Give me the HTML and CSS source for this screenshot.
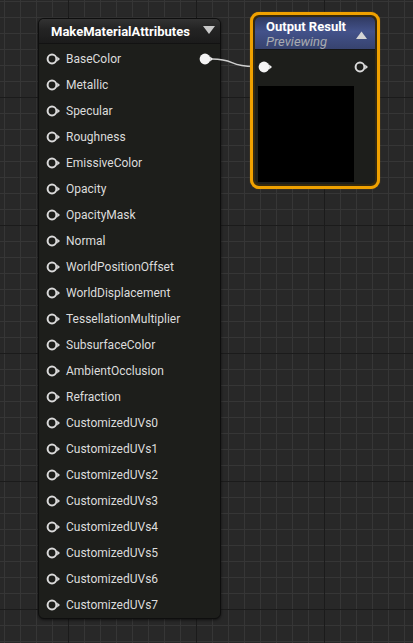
FILE: index.html
```html
<!DOCTYPE html>
<html>
<head>
<meta charset="utf-8">
<link rel="stylesheet" href="styles.css">
</head>
<body>
<div class="canvas">
  <div class="node mma">
    <div class="mma-head">
      <span class="mma-title">MakeMaterialAttributes</span>
      <svg class="tri" width="12" height="9" viewBox="0 0 12 9"><polygon points="0,0 12,0 6,8" fill="#c9c9c9"/></svg>
    </div>
    <div class="mma-body">
      <div class="row"><svg class="pin" width="16" height="12" viewBox="0 0 16 12"><circle cx="6" cy="6" r="4.4" fill="none" stroke="#dadada" stroke-width="2"/><polygon points="11.2,3.5 14,6 11.2,8.5" fill="#dadada"/></svg><span class="lbl">BaseColor</span><svg class="pin out" width="16" height="12" viewBox="0 0 16 12"><circle cx="6" cy="6" r="5.4" fill="#f4f4f4"/><polygon points="11.2,3.5 14,6 11.2,8.5" fill="#f4f4f4"/></svg></div>
      <div class="row"><svg class="pin" width="16" height="12" viewBox="0 0 16 12"><circle cx="6" cy="6" r="4.4" fill="none" stroke="#dadada" stroke-width="2"/><polygon points="11.2,3.5 14,6 11.2,8.5" fill="#dadada"/></svg><span class="lbl">Metallic</span></div>
      <div class="row"><svg class="pin" width="16" height="12" viewBox="0 0 16 12"><circle cx="6" cy="6" r="4.4" fill="none" stroke="#dadada" stroke-width="2"/><polygon points="11.2,3.5 14,6 11.2,8.5" fill="#dadada"/></svg><span class="lbl">Specular</span></div>
      <div class="row"><svg class="pin" width="16" height="12" viewBox="0 0 16 12"><circle cx="6" cy="6" r="4.4" fill="none" stroke="#dadada" stroke-width="2"/><polygon points="11.2,3.5 14,6 11.2,8.5" fill="#dadada"/></svg><span class="lbl">Roughness</span></div>
      <div class="row"><svg class="pin" width="16" height="12" viewBox="0 0 16 12"><circle cx="6" cy="6" r="4.4" fill="none" stroke="#dadada" stroke-width="2"/><polygon points="11.2,3.5 14,6 11.2,8.5" fill="#dadada"/></svg><span class="lbl">EmissiveColor</span></div>
      <div class="row"><svg class="pin" width="16" height="12" viewBox="0 0 16 12"><circle cx="6" cy="6" r="4.4" fill="none" stroke="#dadada" stroke-width="2"/><polygon points="11.2,3.5 14,6 11.2,8.5" fill="#dadada"/></svg><span class="lbl">Opacity</span></div>
      <div class="row"><svg class="pin" width="16" height="12" viewBox="0 0 16 12"><circle cx="6" cy="6" r="4.4" fill="none" stroke="#dadada" stroke-width="2"/><polygon points="11.2,3.5 14,6 11.2,8.5" fill="#dadada"/></svg><span class="lbl">OpacityMask</span></div>
      <div class="row"><svg class="pin" width="16" height="12" viewBox="0 0 16 12"><circle cx="6" cy="6" r="4.4" fill="none" stroke="#dadada" stroke-width="2"/><polygon points="11.2,3.5 14,6 11.2,8.5" fill="#dadada"/></svg><span class="lbl">Normal</span></div>
      <div class="row"><svg class="pin" width="16" height="12" viewBox="0 0 16 12"><circle cx="6" cy="6" r="4.4" fill="none" stroke="#dadada" stroke-width="2"/><polygon points="11.2,3.5 14,6 11.2,8.5" fill="#dadada"/></svg><span class="lbl">WorldPositionOffset</span></div>
      <div class="row"><svg class="pin" width="16" height="12" viewBox="0 0 16 12"><circle cx="6" cy="6" r="4.4" fill="none" stroke="#dadada" stroke-width="2"/><polygon points="11.2,3.5 14,6 11.2,8.5" fill="#dadada"/></svg><span class="lbl">WorldDisplacement</span></div>
      <div class="row"><svg class="pin" width="16" height="12" viewBox="0 0 16 12"><circle cx="6" cy="6" r="4.4" fill="none" stroke="#dadada" stroke-width="2"/><polygon points="11.2,3.5 14,6 11.2,8.5" fill="#dadada"/></svg><span class="lbl">TessellationMultiplier</span></div>
      <div class="row"><svg class="pin" width="16" height="12" viewBox="0 0 16 12"><circle cx="6" cy="6" r="4.4" fill="none" stroke="#dadada" stroke-width="2"/><polygon points="11.2,3.5 14,6 11.2,8.5" fill="#dadada"/></svg><span class="lbl">SubsurfaceColor</span></div>
      <div class="row"><svg class="pin" width="16" height="12" viewBox="0 0 16 12"><circle cx="6" cy="6" r="4.4" fill="none" stroke="#dadada" stroke-width="2"/><polygon points="11.2,3.5 14,6 11.2,8.5" fill="#dadada"/></svg><span class="lbl">AmbientOcclusion</span></div>
      <div class="row"><svg class="pin" width="16" height="12" viewBox="0 0 16 12"><circle cx="6" cy="6" r="4.4" fill="none" stroke="#dadada" stroke-width="2"/><polygon points="11.2,3.5 14,6 11.2,8.5" fill="#dadada"/></svg><span class="lbl">Refraction</span></div>
      <div class="row"><svg class="pin" width="16" height="12" viewBox="0 0 16 12"><circle cx="6" cy="6" r="4.4" fill="none" stroke="#dadada" stroke-width="2"/><polygon points="11.2,3.5 14,6 11.2,8.5" fill="#dadada"/></svg><span class="lbl">CustomizedUVs0</span></div>
      <div class="row"><svg class="pin" width="16" height="12" viewBox="0 0 16 12"><circle cx="6" cy="6" r="4.4" fill="none" stroke="#dadada" stroke-width="2"/><polygon points="11.2,3.5 14,6 11.2,8.5" fill="#dadada"/></svg><span class="lbl">CustomizedUVs1</span></div>
      <div class="row"><svg class="pin" width="16" height="12" viewBox="0 0 16 12"><circle cx="6" cy="6" r="4.4" fill="none" stroke="#dadada" stroke-width="2"/><polygon points="11.2,3.5 14,6 11.2,8.5" fill="#dadada"/></svg><span class="lbl">CustomizedUVs2</span></div>
      <div class="row"><svg class="pin" width="16" height="12" viewBox="0 0 16 12"><circle cx="6" cy="6" r="4.4" fill="none" stroke="#dadada" stroke-width="2"/><polygon points="11.2,3.5 14,6 11.2,8.5" fill="#dadada"/></svg><span class="lbl">CustomizedUVs3</span></div>
      <div class="row"><svg class="pin" width="16" height="12" viewBox="0 0 16 12"><circle cx="6" cy="6" r="4.4" fill="none" stroke="#dadada" stroke-width="2"/><polygon points="11.2,3.5 14,6 11.2,8.5" fill="#dadada"/></svg><span class="lbl">CustomizedUVs4</span></div>
      <div class="row"><svg class="pin" width="16" height="12" viewBox="0 0 16 12"><circle cx="6" cy="6" r="4.4" fill="none" stroke="#dadada" stroke-width="2"/><polygon points="11.2,3.5 14,6 11.2,8.5" fill="#dadada"/></svg><span class="lbl">CustomizedUVs5</span></div>
      <div class="row"><svg class="pin" width="16" height="12" viewBox="0 0 16 12"><circle cx="6" cy="6" r="4.4" fill="none" stroke="#dadada" stroke-width="2"/><polygon points="11.2,3.5 14,6 11.2,8.5" fill="#dadada"/></svg><span class="lbl">CustomizedUVs6</span></div>
      <div class="row"><svg class="pin" width="16" height="12" viewBox="0 0 16 12"><circle cx="6" cy="6" r="4.4" fill="none" stroke="#dadada" stroke-width="2"/><polygon points="11.2,3.5 14,6 11.2,8.5" fill="#dadada"/></svg><span class="lbl">CustomizedUVs7</span></div>
    </div>
  </div>

  <svg class="wire" width="413" height="643" viewBox="0 0 413 643"><path d="M212 59 C 236 59, 228 66.5, 254 66.5" fill="none" stroke="#cfcfcf" stroke-width="1.6"/></svg>

  <div class="node outnode">
    <div class="out-inner">
      <div class="out-head">
        <div class="out-texts">
          <div class="out-title">Output Result</div>
          <div class="out-sub">Previewing</div>
        </div>
        <svg class="tri-up" width="11" height="8" viewBox="0 0 11 8"><polygon points="0,8 11,8 5.5,0.5" fill="#d4d4d4"/></svg>
      </div>
      <div class="out-row">
        <svg class="pin" width="16" height="12" viewBox="0 0 16 12"><circle cx="6" cy="6" r="5.4" fill="#f4f4f4"/><polygon points="11.2,3.5 14,6 11.2,8.5" fill="#f4f4f4"/></svg>
        <svg class="pin" width="16" height="12" viewBox="0 0 16 12"><circle cx="6" cy="6" r="4.4" fill="none" stroke="#dadada" stroke-width="2"/><polygon points="11.2,3.5 14,6 11.2,8.5" fill="#dadada"/></svg>
      </div>
      <div class="preview"></div>
    </div>
  </div>
</div>
</body>
</html>
```

FILE: styles.css
```css
html, body {
  margin: 0;
  padding: 0;
}
body {
  width: 413px;
  height: 643px;
  overflow: hidden;
  font-family: Roboto, "Noto Sans", sans-serif;
}
.canvas {
  position: relative;
  width: 413px;
  height: 643px;
  background-color: #282828;
  background-image:
    linear-gradient(#1b1b1b 1px, transparent 1px),
    linear-gradient(90deg, #1b1b1b 1px, transparent 1px),
    linear-gradient(#363636 1px, transparent 1px),
    linear-gradient(90deg, #363636 1px, transparent 1px);
  background-size: 128px 128px, 128px 128px, 16px 16px, 16px 16px;
  background-position: 0 97px, 68px 0, 0 1px, 4px 0;
}
.node {
  position: absolute;
}
.mma {
  left: 38px;
  top: 18px;
  width: 183px;
  height: 601px;
  box-sizing: border-box;
  border: 1px solid #0e0e0e;
  border-radius: 6px;
  background: #1d1e1b;
  box-shadow: 0 1px 3px rgba(0,0,0,0.6), inset 0 1px 0 rgba(255,255,255,0.12);
  overflow: hidden;
  display: flex;
  flex-direction: column;
}
.mma-head {
  height: 25px;
  box-sizing: border-box;
  display: flex;
  align-items: center;
  padding: 0 5px 0 12px;
  background: linear-gradient(#333333 0%, #242424 40%, #1b1b1b 100%);
  border-bottom: 1px solid #121212;
}
.mma-title {
  flex: 1;
  color: #ffffff;
  font-size: 13px;
  font-weight: bold;
  padding-top: 1px;
}
.tri {
  display: block;
  margin-top: -2px;
}
.mma-body {
  padding-top: 2px;
  display: flex;
  flex-direction: column;
}
.row {
  height: 26px;
  display: flex;
  align-items: center;
  padding-left: 7px;
  padding-right: 5px;
}
.pin {
  display: block;
  flex: none;
}
.lbl {
  margin-left: 4px;
  color: #dcdcdc;
  font-size: 12px;
}
.pin.out {
  margin-left: auto;
}
.wire {
  position: absolute;
  left: 0;
  top: 0;
  pointer-events: none;
}
.outnode {
  left: 250px;
  top: 12px;
  width: 130px;
  height: 177px;
  box-sizing: border-box;
  border: 3px solid #f0a100;
  border-radius: 9px;
  padding: 2px;
  background: #35290f;
  box-shadow: 0 0 1px rgba(240,160,0,0.7);
}
.out-inner {
  height: 100%;
  border-radius: 5px;
  background: #1d1e1b;
  overflow: hidden;
  display: flex;
  flex-direction: column;
}
.out-head {
  height: 33px;
  box-sizing: border-box;
  display: flex;
  align-items: center;
  padding: 1px 8px 0 11px;
  background: linear-gradient(180deg, #303a62 0%, #43528a 45%, #37436f 100%);
  border-bottom: 1px solid #151515;
}
.out-texts {
  flex: 1;
  display: flex;
  flex-direction: column;
}
.out-title {
  color: #ffffff;
  font-size: 13px;
  font-weight: bold;
  line-height: 15px;
}
.out-sub {
  color: #a9abb0;
  font-size: 13px;
  font-style: italic;
  line-height: 15px;
}
.tri-up {
  display: block;
  margin-top: 2px;
}
.out-row {
  margin-top: 6px;
  height: 22px;
  display: flex;
  align-items: center;
  justify-content: space-between;
  padding: 0 5px 0 3px;
}
.preview {
  margin: 8px 0 0 3px;
  width: 96px;
  height: 96px;
  background: #000000;
}
```
